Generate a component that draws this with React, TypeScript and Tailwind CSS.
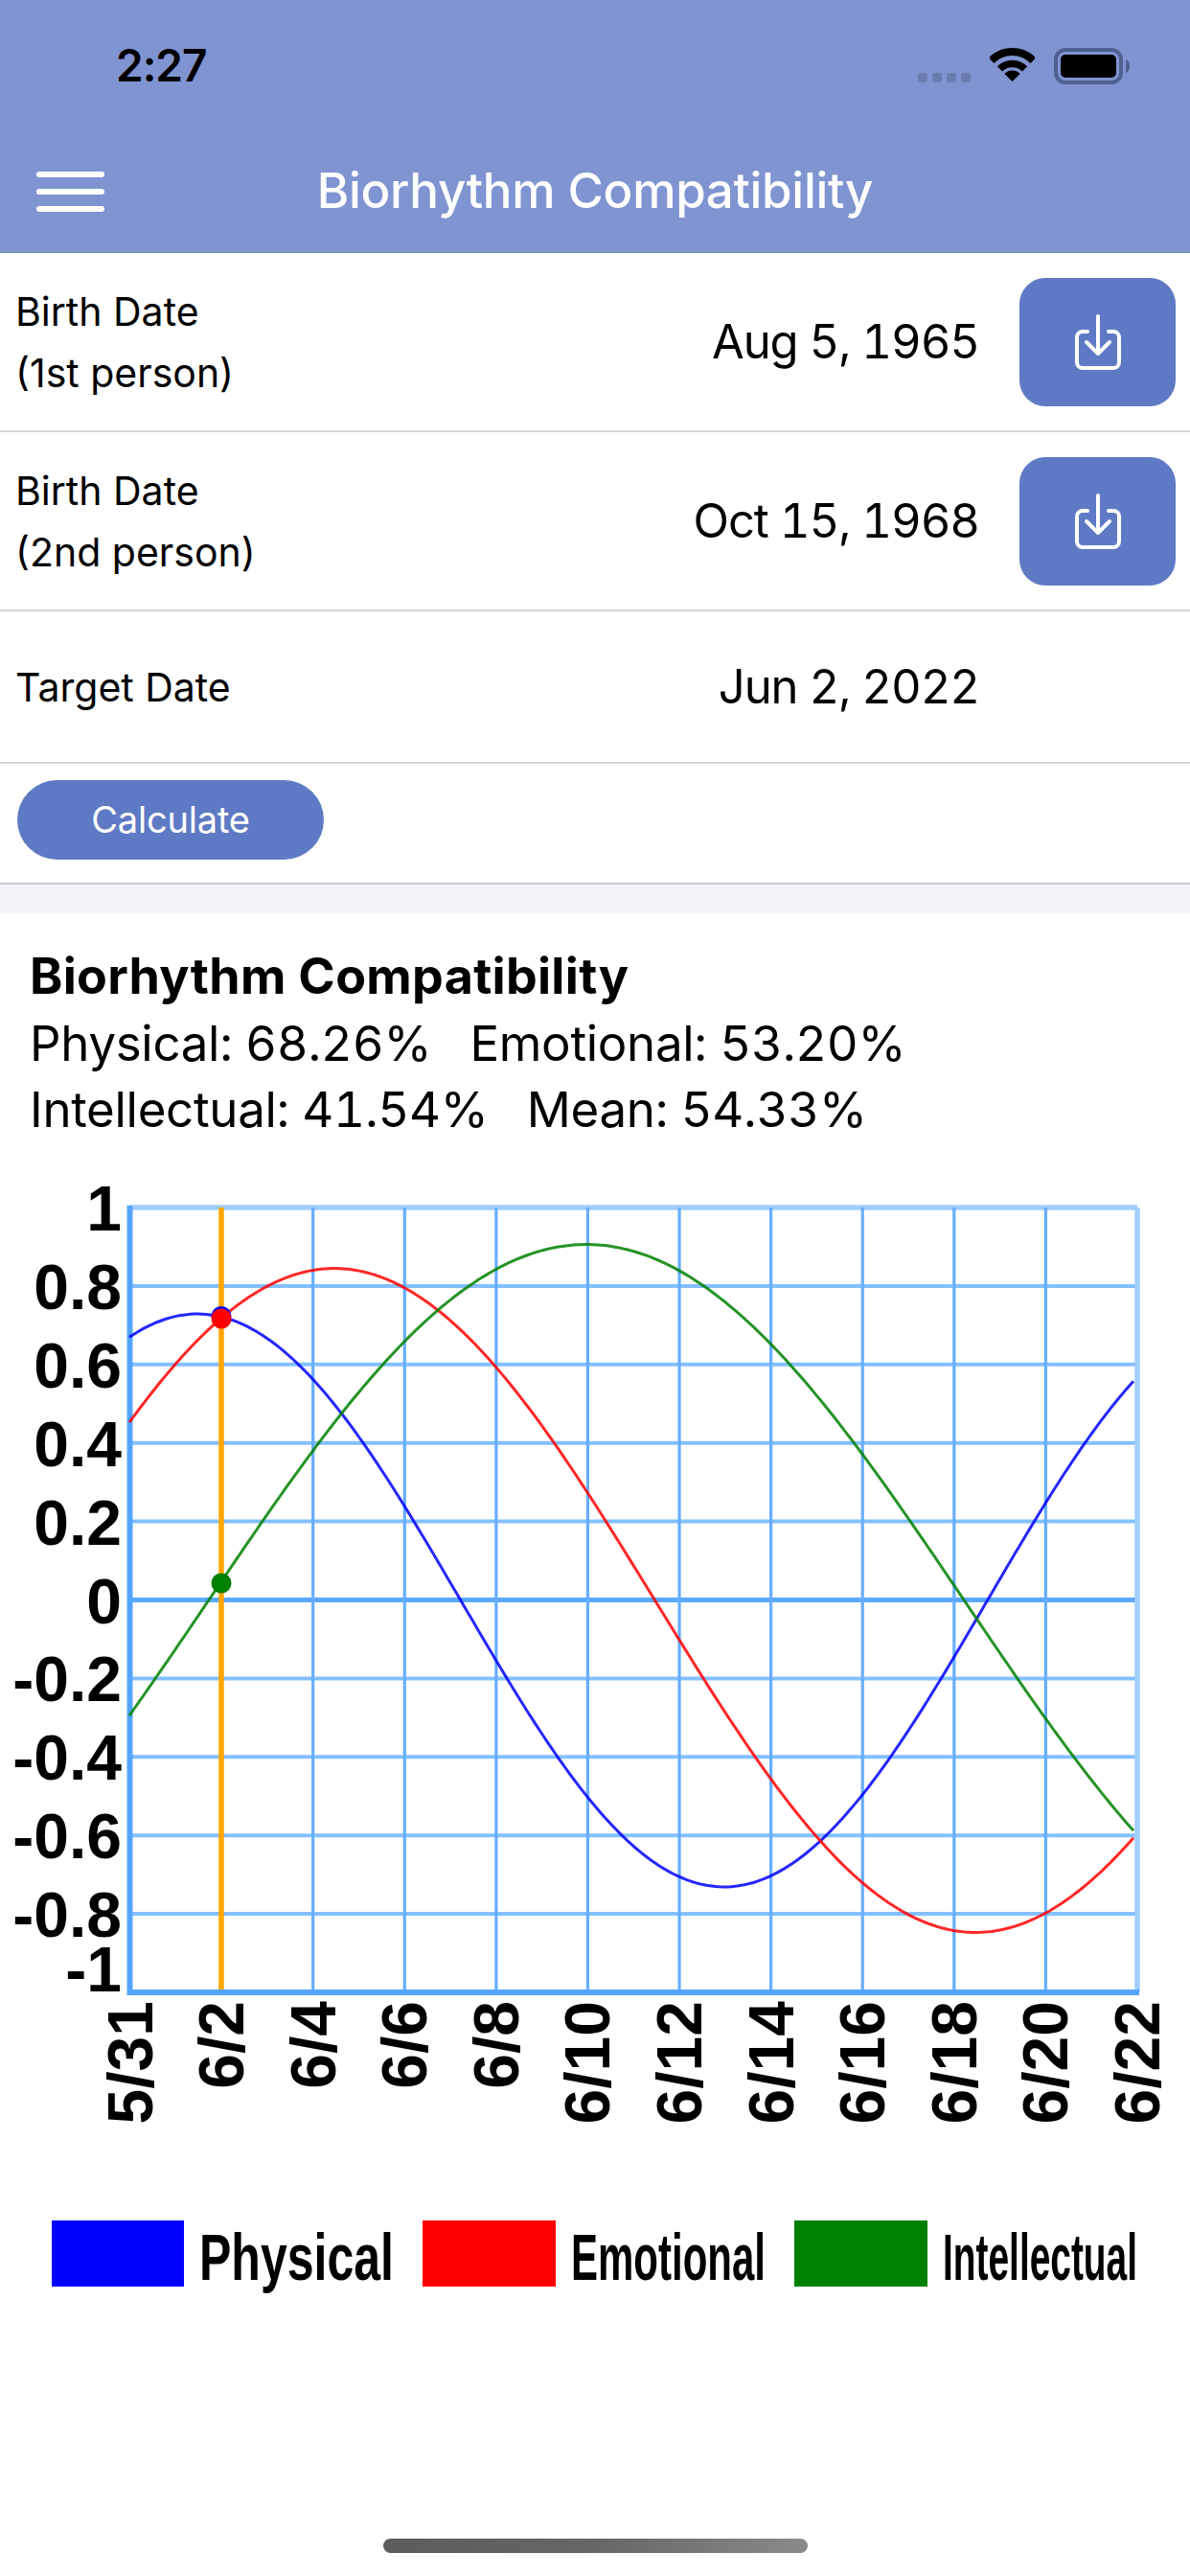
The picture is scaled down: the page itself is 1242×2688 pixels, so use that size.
const Y0 = 1668;
const YS = 409.5;
const XL = 135.5;
const XR = 1187;
const XSTEP = (XR - XL) / 11;
const DAY = 47.8;

const yTicks = ["1", "0.8", "0.6", "0.4", "0.2", "0", "-0.2", "-0.4", "-0.6", "-0.8", "-1"];
const xTicks = ["5/31", "6/2", "6/4", "6/6", "6/8", "6/10", "6/12", "6/14", "6/16", "6/18", "6/20", "6/22"];

const curve = (amp: number, peak: number, period: number) => {
  const pts: string[] = [];
  for (let x = 135; x <= 1184; x += 4) {
    const v = amp * Math.cos((2 * Math.PI * (x - peak)) / (period * DAY));
    pts.push(`${x},${(Y0 - v * YS).toFixed(1)}`);
  }
  return pts.join(" ");
};

function Chart() {
  const arial = { fontFamily: '"Liberation Sans", Arial, sans-serif' };
  return (
    <svg viewBox="0 1220 1242 1200" className="block w-[1242px] h-[1200px] blur-[0.7px]" style={arial}>
      {yTicks.map((_, i) => (
        <line
          key={i}
          x1={XL}
          x2={XR}
          y1={1258 + i * 81.9}
          y2={1258 + i * 81.9}
          stroke={i === 5 ? "#5aa8ff" : i === 0 ? "#a0ceff" : "#84c0ff"}
          strokeWidth={i === 5 ? 5 : i === 0 ? 5.5 : 4}
        />
      ))}
      {xTicks.map((_, i) =>
        i === 0 ? null : (
          <line
            key={i}
            x1={XL + i * XSTEP}
            x2={XL + i * XSTEP}
            y1={1258}
            y2={2077}
            stroke={i === 11 ? "#a0ceff" : "#66aeff"}
            strokeWidth={i === 11 ? 5.5 : 3.2}
          />
        )
      )}
      <line x1={231} x2={231} y1={1258} y2={2077} stroke="#ffa500" strokeWidth={5.5} />
      <line x1={XL} x2={XL} y1={1256} y2={2080} stroke="#55a5ff" strokeWidth={6} />
      <line x1={XL} x2={XR + 2} y1={2077} y2={2077} stroke="#55a5ff" strokeWidth={6} />
      <polyline points={curve(0.73, 206, 23)} fill="none" stroke="#0000ff" strokeWidth={3} opacity={0.85} />
      <polyline points={curve(0.846, 349, 28)} fill="none" stroke="#ff0000" strokeWidth={3} opacity={0.85} />
      <polyline points={curve(0.907, 612, 33)} fill="none" stroke="#008000" strokeWidth={3} opacity={0.85} />
      <circle cx={231} cy={1371.5} r={10.5} fill="#0000ff" />
      <circle cx={231} cy={1374} r={10.5} fill="#ff0000" />
      <circle cx={231} cy={1650} r={10.5} fill="#008000" />
      {yTicks.map((t, i) => (
        <text
          key={t}
          x={127}
          y={(i === 10 ? 2052 : 1258 + i * 81.9) + 24}
          textAnchor="end"
          fontSize={66}
          fontWeight={700}
          fill="#000"
        >
          {t}
        </text>
      ))}
      {xTicks.map((t, i) => {
        const x = XL + i * XSTEP - 1 + 24;
        return (
          <text
            key={t}
            transform={`translate(${x} 2086) rotate(-90)`}
            textAnchor="end"
            fontSize={66}
            fontWeight={700}
            fill="#000"
          >
            {t}
          </text>
        );
      })}
      <rect x={54} y={2315} width={138} height={69} fill="#0000ff" />
      <text x={208} y={2377} fontSize={68} fontWeight={700} textLength={203} lengthAdjust="spacingAndGlyphs">
        Physical
      </text>
      <rect x={441} y={2315} width={139} height={69} fill="#ff0000" />
      <text x={596} y={2377} fontSize={68} fontWeight={700} textLength={203} lengthAdjust="spacingAndGlyphs">
        Emotional
      </text>
      <rect x={829} y={2315} width={139} height={69} fill="#008000" />
      <text x={984} y={2377} fontSize={68} fontWeight={700} textLength={203} lengthAdjust="spacingAndGlyphs">
        Intellectual
      </text>
    </svg>
  );
}

function DownloadButton() {
  return (
    <button className="flex h-[134px] w-[163px] items-center justify-center rounded-[27px] bg-[#5f7ac4]">
      <svg width="50" height="60" viewBox="0 0 50 60" fill="none" stroke="#fff" strokeWidth="4" strokeLinecap="round" strokeLinejoin="round">
        <path d="M14 19H9a6 6 0 0 0-6 6v26a6 6 0 0 0 6 6h32a6 6 0 0 0 6-6V25a6 6 0 0 0-6-6h-5" />
        <path d="M25 3v38M13 30l12 12 12-12" />
      </svg>
    </button>
  );
}

function DateRow({ l1, l2, value, button }: { l1: string; l2?: string; value: string; button?: boolean }) {
  return (
    <div className={`flex items-center border-b-2 border-[#d6d6d6] pl-[16px] ${button ? "h-[187px] pr-[15px]" : "h-[159px] pr-[220px]"}`}>
      <div className="flex-1 text-[41px] leading-[64px] text-black">
        <div>{l1}</div>
        {l2 && <div>{l2}</div>}
      </div>
      <div className={`text-[49px] leading-[60px] tabular-nums tracking-[-1.1px] text-black ${button ? "mr-[42px]" : ""}`}>{value}</div>
      {button && <DownloadButton />}
    </div>
  );
}

export default function App() {
  return (
    <div className="flex h-[2688px] w-[1242px] flex-col overflow-hidden bg-white font-['Inter',sans-serif]">
      <header className="h-[264px] border-b border-[#6f82b8] bg-[#7f94d1]">
        <div className="flex h-[136px] items-start justify-between pl-[121px] pr-[62px] pt-[43px]">
          <span className="text-[46px] font-semibold leading-[50px] tracking-[-1px] text-black">2:27</span>
          <div className="flex items-start gap-[20px] pt-[7px]">
            <div className="mt-[26px] flex gap-[5px]">
              <span className="h-[10px] w-[10px] rounded-[3px] bg-[#6b7cb0]" />
              <span className="h-[10px] w-[10px] rounded-[3px] bg-[#6b7cb0]" />
              <span className="h-[10px] w-[10px] rounded-[3px] bg-[#6b7cb0]" />
              <span className="h-[10px] w-[10px] rounded-[3px] bg-[#6b7cb0]" />
            </div>
            <svg width="47" height="35" viewBox="0 0 47 35" fill="none" stroke="#000">
              <path d="M1.6 13.1A31 31 0 0 1 45.4 13.1" strokeWidth="8" />
              <path d="M10.4 21.9A18.5 18.5 0 0 1 36.6 21.9" strokeWidth="7.5" />
              <path d="M23.5 35L15.4 26.9A11.5 11.5 0 0 1 31.6 26.9Z" fill="#000" stroke="none" />
            </svg>
            <svg width="80" height="38" viewBox="0 0 80 38">
              <rect x="2" y="2" width="68" height="34" rx="10" fill="none" stroke="#4f5f8f" strokeWidth="4" />
              <rect x="7" y="7" width="58" height="24" rx="5" fill="#000" />
              <path d="M75 12c3 1 4 4 4 7s-1 6-4 7z" fill="#4f5f8f" />
            </svg>
          </div>
        </div>
        <div className="flex items-start pl-[38px] pr-[109px]">
          <div className="mt-[43px] flex w-[71px] flex-col gap-[12px]">
            <span className="h-[6px] rounded-full bg-white" />
            <span className="h-[6px] rounded-full bg-white" />
            <span className="h-[6px] rounded-full bg-white" />
          </div>
          <div className="flex-1 pt-[33px] text-center text-[51px] font-medium leading-[60px] tracking-[-0.3px] text-white">
            Biorhythm Compatibility
          </div>
        </div>
      </header>

      <DateRow l1="Birth Date" l2="(1st person)" value="Aug 5, 1965" button />
      <DateRow l1="Birth Date" l2="(2nd person)" value="Oct 15, 1968" button />
      <DateRow l1="Target Date" value="Jun 2, 2022" />

      <div className="h-[124px] pl-[18px] pt-[17px]">
        <button className="h-[83px] w-[320px] rounded-full bg-[#5f7ac4] text-[38px] tracking-[-0.2px] text-white">Calculate</button>
      </div>
      <div className="h-[32px] border-t-2 border-[#c9c9d2] bg-[#f3f4f8]" />

      <section className="pl-[31px] pt-[31px] text-black">
        <h1 className="text-[52px] font-bold leading-[70px] tracking-[0.3px]">Biorhythm Compatibility</h1>
        <p className="text-[51px] leading-[69px] tabular-nums tracking-[-0.3px]">Physical: 68.26%{"\u00a0\u00a0\u00a0"}Emotional: 53.20%</p>
        <p className="text-[51px] leading-[69px] tabular-nums tracking-[-0.3px]">Intellectual: 41.54%{"\u00a0\u00a0\u00a0"}Mean: 54.33%</p>
      </section>

      <div className="mt-[30px]">
        <Chart />
      </div>

      <div className="mt-auto flex justify-center pb-[24px]">
        <span className="h-[15px] w-[443px] rounded-full bg-gradient-to-r from-[#5c5c5c] via-[#666] to-[#8a8a8a]" />
      </div>
    </div>
  );
}
